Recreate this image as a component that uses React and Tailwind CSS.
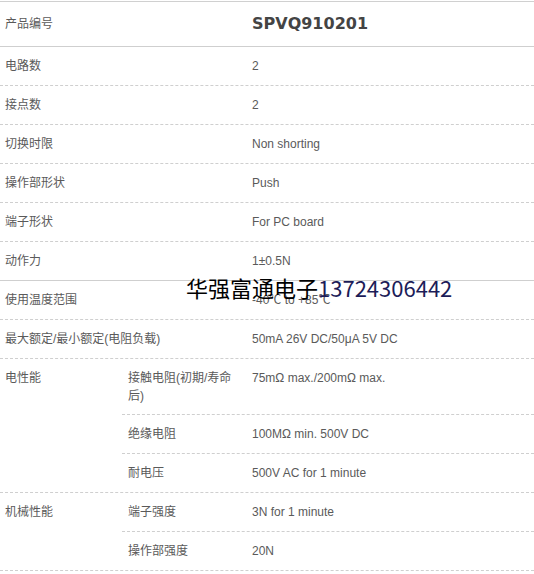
const rows = [
  { label: "电路数", value: "2" },
  { label: "接点数", value: "2" },
  { label: "切换时限", value: "Non shorting" },
  { label: "操作部形状", value: "Push" },
  { label: "端子形状", value: "For PC board" },
  { label: "动作力", value: "1±0.5N", solid: true },
  { label: "使用温度范围", value: "-40℃ to +85℃" },
  { label: "最大额定/最小额定(电阻负载)", value: "50mA 26V DC/50μA 5V DC" },
];

function Row({ label, value, solid }) {
  return (
    <div
      className={
        solid
          ? "flex h-[39px] items-center border-b border-solid border-[#cfcfcf]"
          : "flex h-[39px] items-center border-b border-dashed border-[#cfcfcf]"
      }
    >
      <div className="w-[247px] pl-[5px]">{label}</div>
      <div className="pl-[5px]">{value}</div>
    </div>
  );
}

function Group({ label, items }) {
  return (
    <div className="flex border-b border-dashed border-[#cfcfcf]">
      <div className="w-[122px] pl-[5px] pt-[10px]">{label}</div>
      <div className="flex-1">
        {items.map((it, i) => {
          const last = i === items.length - 1;
          return (
            <div
              key={i}
              className={
                last
                  ? "flex h-[38px] items-center"
                  : it.tall
                  ? "flex h-[56px] items-start border-b border-dashed border-[#cfcfcf] pt-[10px]"
                  : "flex h-[39px] items-center border-b border-dashed border-[#cfcfcf]"
              }
            >
              <div className="w-[125px] pl-[6px]">{it.label}</div>
              <div className="pl-[5px]">{it.value}</div>
            </div>
          );
        })}
      </div>
    </div>
  );
}

export default function App() {
  return (
    <div className="relative w-[534px] h-[574px] overflow-hidden bg-white pt-px font-['Liberation_Sans','Noto_Sans_CJK_SC',sans-serif] text-[12px] leading-[18px] text-[#5a5a5a]">
      <div className="border-t border-[#d0d0d0]">
        {/* 产品编号 */}
        <div className="flex h-[45px] items-center border-b border-[#cfcfcf]">
          <div className="w-[247px] pl-[5px]">产品编号</div>
          <div className="pl-[5px] font-['DejaVu_Sans',sans-serif] text-[16px] font-bold text-[#444]">
            SPVQ910201
          </div>
        </div>

        {rows.map((r) => (
          <Row key={r.label} {...r} />
        ))}

        <Group
          label="电性能"
          items={[
            {
              label: (
                <>
                  接触电阻(初期/寿命
                  <br />
                  后)
                </>
              ),
              value: "75mΩ max./200mΩ max.",
              tall: true,
            },
            { label: "绝缘电阻", value: "100MΩ min. 500V DC" },
            { label: "耐电压", value: "500V AC for 1 minute" },
          ]}
        />
        <Group
          label="机械性能"
          items={[
            { label: "端子强度", value: "3N for 1 minute" },
            { label: "操作部强度", value: "20N" },
          ]}
        />
      </div>

      {/* 水印 */}
      <div className="absolute left-[186px] top-[274px] whitespace-nowrap font-['Noto_Sans_CJK_SC',sans-serif] text-[22px] leading-[26px]">
        <span className="text-black">华强富通电子</span>
        <span className="text-[#1c1c58]">13724306442</span>
      </div>
    </div>
  );
}
